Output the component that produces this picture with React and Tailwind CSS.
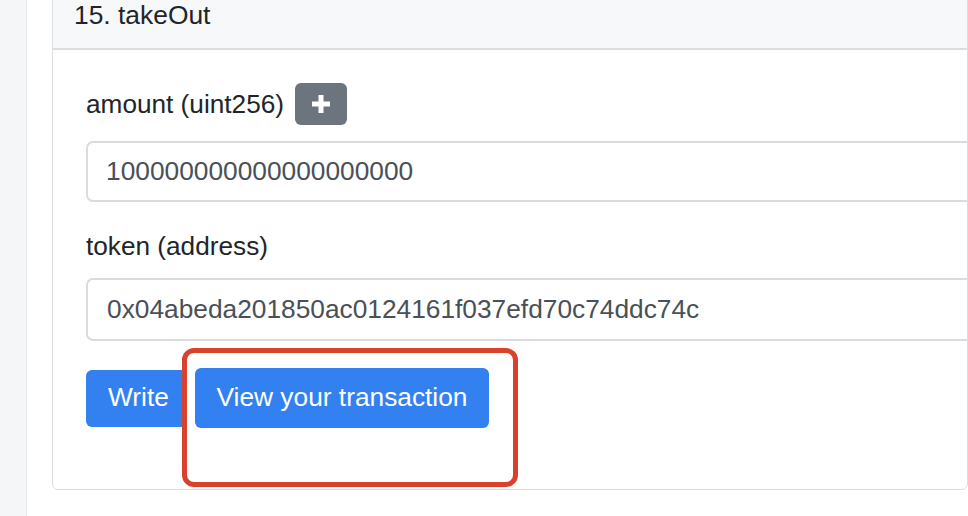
export default function App() {
  return (
    <div className="flex h-[516px] w-[968px] overflow-hidden bg-white font-['Liberation_Sans',Arial,sans-serif]">
      <div className="w-[27px] shrink-0 border-r border-[#e6e7e9] bg-[#f5f6f8]" />
      <div className="w-[25px] shrink-0" />
      <div className="mt-[-22px] h-[512px] flex-1 rounded-[6px] border border-[#dcdddf] min-w-0">
        <div className="border-b-[2px] border-[#dcdddf] bg-[#f7f8fa] pl-[21px] pt-[17px] pb-[13px] text-[26.4px] leading-[39px] text-[#212529]">
          15. takeOut
        </div>
        <div className="pl-[33px] pt-[33px]">
          <div className="flex items-center gap-[11px] text-[26.2px] leading-[39px] text-[#212529]">
            <span>amount (uint256)</span>
            <button className="flex h-[42px] w-[52px] items-center justify-center rounded-[6px] bg-[#6c757d]">
              <svg width="22" height="22" viewBox="0 0 22 22">
                <path d="M11 2v18M2 11h18" stroke="white" strokeWidth="5" strokeLinecap="butt" />
              </svg>
            </button>
          </div>
          <div className="mt-[16px] flex h-[61px] items-center rounded-l-[7px] border-[2px] border-r-0 border-[#d9dcdf] pl-[18px] text-[26.3px] text-[#495057]">
            100000000000000000000
          </div>
          <div className="mt-[25px] text-[26.2px] leading-[39px] text-[#212529]">token (address)</div>
          <div className="mt-[12px] flex h-[63px] items-center rounded-l-[7px] border-[2px] border-r-0 border-[#d9dcdf] pl-[19px] text-[26.3px] text-[#495057]">
            0x04abeda201850ac0124161f037efd70c74ddc74c
          </div>
          <div className="relative mt-[27px] flex items-center gap-[11px]">
            <button className="flex h-[57px] w-[98px] items-center rounded-l-[6px] bg-[#3381f1] pl-[22px] text-[26.3px] text-white">
              Write
            </button>
            <button className="flex h-[60px] w-[294px] items-center justify-center rounded-[6px] bg-[#3381f1] text-[26.3px] text-white">
              View your transaction
            </button>
            <div className="pointer-events-none absolute left-[96px] top-[-20px] h-[139px] w-[336px] rounded-[12px] border-[5px] border-[#d9412d]" />
          </div>
        </div>
      </div>
    </div>
  );
}
